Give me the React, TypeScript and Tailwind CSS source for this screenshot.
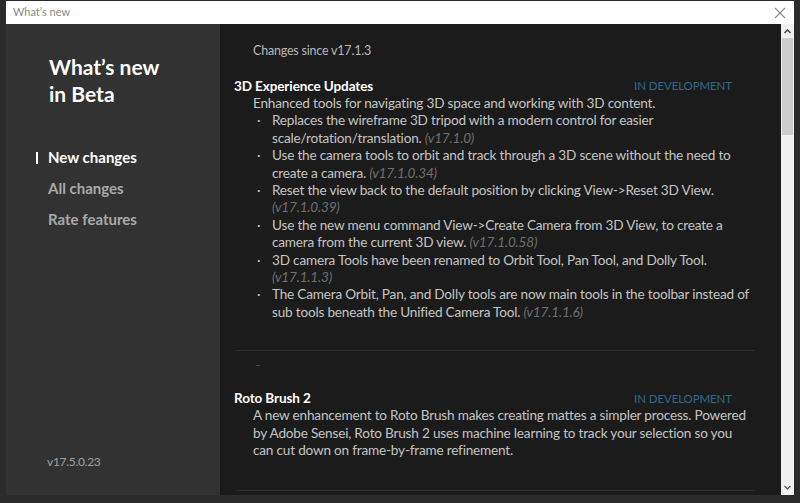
import React from 'react';

const font = { fontFamily: 'Lato, "Open Sans", sans-serif' };

type Item = { text: string; ver: string };

const items3d: Item[] = [
    { text: 'Replaces the wireframe 3D tripod with a modern control for easier scale/rotation/translation.', ver: '(v17.1.0)' },
    { text: 'Use the camera tools to orbit and track through a 3D scene without the need to create a camera.', ver: '(v17.1.0.34)' },
    { text: 'Reset the view back to the default position by clicking View->Reset 3D View.', ver: '(v17.1.0.39)' },
    { text: 'Use the new menu command View->Create Camera from 3D View, to create a camera from the current 3D view.', ver: '(v17.1.0.58)' },
    { text: '3D camera Tools have been renamed to Orbit Tool, Pan Tool, and Dolly Tool.', ver: '(v17.1.1.3)' },
    { text: 'The Camera Orbit, Pan, and Dolly tools are now main tools in the toolbar instead of sub tools beneath the Unified Camera Tool.', ver: '(v17.1.1.6)' },
];

const Section: React.FC<{ title: string; desc: string; items?: Item[] }> = ({ title, desc, items }) => (
    <div>
        <div className="flex items-center justify-between -mr-[7px] pr-[24px] h-[18px]">
            <h3 className="text-[13.5px] font-bold tracking-[-0.1px] text-white">{title}</h3>
            <span className="text-[11.5px] tracking-[-0.1px] text-[#2f6a8c] uppercase">In development</span>
        </div>
        <p className="pl-[19px] text-[13.6px] tracking-[-0.2px] leading-[17.4px] text-[#c4c4c4]">{desc}</p>
        {items && (
            <ul className="pl-[19px] text-[13.6px] tracking-[-0.2px] leading-[17.4px] text-[#c4c4c4]">
                {items.map((it, i) => (
                    <li key={i} className="flex">
                        <span className="w-[19px] shrink-0 pl-[4px]">·</span>
                        <span>
                            {it.text} <span className="italic text-[#6f6f6f]">{it.ver}</span>
                        </span>
                    </li>
                ))}
            </ul>
        )}
    </div>
);

export default function App() {
    return (
        <div className="w-[800px] h-[503px] bg-[#2b2b2b] pt-[1px] px-[6px] overflow-hidden" style={font}>
            <div className="h-[494px] flex flex-col">
                {/* title bar */}
                <div className="h-[23px] bg-white flex items-center justify-between pl-[7px] pr-[8px] shrink-0">
                    <span className="text-[11px] text-[#8a8a8a]">What’s new</span>
                    <svg width="12" height="12" viewBox="0 0 12 12" className="text-[#8a8a8a]">
                        <path d="M1 1 L11 11 M11 1 L1 11" stroke="currentColor" strokeWidth="1.1" fill="none" />
                    </svg>
                </div>
                <div className="flex flex-1 min-h-0">
                    {/* sidebar */}
                    <aside className="w-[214px] bg-[#323232] flex flex-col shrink-0">
                        <h1 className="pl-[43px] pt-[29px] text-[21px] leading-[27px] font-bold text-white">
                            What’s new<br />in Beta
                        </h1>
                        <nav className="mt-[41px] flex flex-col gap-[12px] text-[15px] font-bold">
                            <div className="relative pl-[42px] text-white h-[19px] leading-[19px]">
                                <span className="absolute left-[30px] top-[4px] w-[2px] h-[12px] bg-white" />
                                New changes
                            </div>
                            <div className="pl-[42px] text-[#a9a9a9] h-[19px] leading-[19px]">All changes</div>
                            <div className="pl-[42px] text-[#a9a9a9] h-[19px] leading-[19px]">Rate features</div>
                        </nav>
                        <div className="mt-auto mb-[24px] pl-[41px] text-[12px] tracking-[-0.3px] text-[#a0a0a0]">v17.5.0.23</div>
                    </aside>
                    {/* content */}
                    <main className="flex-1 bg-[#1b1b1b] pl-[14px] pr-[32px] overflow-hidden">
                        <p className="pl-[19px] pt-[18px] text-[12.5px] tracking-[-0.2px] text-[#b8b8b8] leading-[17px]">Changes since v17.1.3</p>
                        <div className="mt-[18px]">
                            <Section
                                title="3D Experience Updates"
                                desc="Enhanced tools for navigating 3D space and working with 3D content."
                                items={items3d}
                            />
                        </div>
                        <div className="mt-[29px] ml-[2px] -mr-[6px] h-px bg-[#2f2f2f]" />
                        <div className="ml-[22px] mt-[14px] w-[4px] h-px bg-[#444]" />
                        <div className="mt-[23px]">
                            <Section
                                title="Roto Brush 2"
                                desc="A new enhancement to Roto Brush makes creating mattes a simpler process. Powered by Adobe Sensei, Roto Brush 2 uses machine learning to track your selection so you can cut down on frame-by-frame refinement."
                            />
                        </div>
                        <div className="mt-[30px] ml-[2px] -mr-[6px] h-px bg-[#2f2f2f]" />
                    </main>
                    {/* scrollbar */}
                    <div className="w-[13px] bg-[#f0f0f0] flex flex-col items-center shrink-0">
                        <svg width="9" height="13" viewBox="0 0 9 13" className="mt-[1px] text-[#505050]">
                            <path d="M1.5 8 L4.5 5 L7.5 8" stroke="currentColor" strokeWidth="1.6" fill="none" />
                        </svg>
                        <div className="w-[11px] h-[97px] bg-[#cdcdcd]" />
                        <div className="flex-1" />
                        <svg width="9" height="13" viewBox="0 0 9 13" className="mb-[1px] text-[#505050]">
                            <path d="M1.5 5 L4.5 8 L7.5 5" stroke="currentColor" strokeWidth="1.2" fill="none" />
                        </svg>
                    </div>
                </div>
            </div>
        </div>
    );
}
